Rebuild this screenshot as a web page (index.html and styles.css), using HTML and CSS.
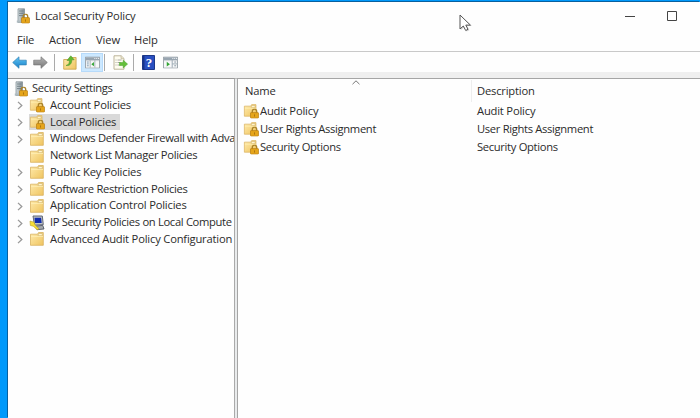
FILE: index.html
```
<!DOCTYPE html>
<html lang="en">
<head>
<meta charset="utf-8">
<title>Local Security Policy</title>
<link rel="stylesheet" href="styles.css">
</head>
<body>
<svg class="defs" aria-hidden="true">
  <defs>
    <linearGradient id="gold" x2="1" y2="1"><stop stop-color="#ffebad"/><stop offset="1" stop-color="#efc45f"/></linearGradient>
    <linearGradient id="steel" x2="1"><stop stop-color="#d5dde0"/><stop offset="1" stop-color="#839097"/></linearGradient>
    <linearGradient id="blue" x2="0" y2="1"><stop stop-color="#62c7f5"/><stop offset="1" stop-color="#167dc7"/></linearGradient>
    <linearGradient id="grey" x2="0" y2="1"><stop stop-color="#b5b5b5"/><stop offset="1" stop-color="#777"/></linearGradient>
    <symbol id="lock" viewBox="0 0 8 9"><path d="M2 4V2.6a2 2 0 0 1 4 0V4" fill="none" stroke="#a98228" stroke-width="1.2"/><rect x=".4" y="3.7" width="7.2" height="5" rx=".6" fill="#e5a51b" stroke="#b57a10" stroke-width=".6"/><path d="M4 5.3v2" stroke="#a8700f" stroke-width=".8"/></symbol>
    <symbol id="folder" viewBox="0 0 16 16"><path d="M1.5 3.2h7l1-1.7h4.8v12.8H1.5z" fill="url(#gold)" stroke="#d9b260" stroke-width=".8"/><path d="M9.5 2.5h3.8v2.2H9z" fill="#fff4cf" stroke="#cfb067" stroke-width=".6"/><path d="M2 5.5h12" stroke="#fff0b8" stroke-width=".7"/></symbol>
    <symbol id="lockfolder" viewBox="0 0 16 16"><use href="#folder" width="14.5" height="15"/><use href="#lock" x="7" y="5.5" width="9" height="10"/></symbol>
    <symbol id="server" viewBox="0 0 14 16"><path d="M2 .8h6.5v13.7H2z" fill="url(#steel)" stroke="#7c898f" stroke-width=".7"/><path d="M3 3h4.5M3 5.3h4.5M3 7.6h4.5" stroke="#65737a" stroke-width=".8"/><path d="M.8 12.5h6.5v2.2H.8z" fill="#aebbc0"/><use href="#lock" x="5" y="5.5" width="9" height="10"/></symbol>
    <symbol id="ipsec" viewBox="0 0 16 16"><path d="M4 1h9.3l1 8.6-8.8.6z" fill="#c0c4c8" stroke="#555b68" stroke-width=".9"/><path d="M5.5 2.7h6.6l.6 5.4H6z" fill="#102cad"/><path d="M6 11.2l7.8-.8 1.2 3.6-7 .7z" fill="#a5aaae" stroke="#434958" stroke-width=".8"/><path d="M1 6l4 1.2 1 2.5 4 4.2-1.8.8-3.9-3.5-2.9-.7z" fill="#f6de36" stroke="#b69c24" stroke-width=".6"/></symbol>
    <symbol id="chevron" viewBox="0 0 6 9"><path d="M1 .9l3.8 3.6L1 8.1" fill="none" stroke="#999" stroke-width="1.3"/></symbol>
    <symbol id="arrow" viewBox="0 0 15 13"><path d="M.7 6.5L7 .8v3.4h7.3v4.7H7v3.4z"/></symbol>
    <symbol id="console" viewBox="0 0 16 13"><path d="M.5.5h15v12H.5z" fill="#f7f8f9" stroke="#98a1a8"/><path d="M1 1h14v2.8H1z" fill="#98a5b0"/><path d="M10 2.2h1M12 2.2h1M14 2.2h1" stroke="#fff"/><path d="M1 4.5h14" stroke="#c7cdd2"/></symbol>
  </defs>
</svg>
<div class="window">
  <header class="titlebar">
    <svg class="app-icon"><use href="#server"/></svg>
    <span class="title">Local Security Policy</span>
    <svg class="minimize" viewBox="0 0 10 10"><path d="M0 5.5h10" stroke="#444"/></svg>
    <svg class="maximize" viewBox="0 0 10 10"><path d="M.5.5h9v9h-9z" fill="none" stroke="#444"/></svg>
  </header>
  <nav class="menu"><span class="m-file">File</span><span class="m-action">Action</span><span class="m-view">View</span><span class="m-help">Help</span></nav>
  <div class="toolbar">
    <svg class="nav-arrow back"><use href="#arrow"/></svg>
    <svg class="nav-arrow forward" viewBox="0 0 15 13"><use href="#arrow" width="15" height="13" transform="translate(15 0) scale(-1 1)"/></svg>
    <i class="sep sep-first"></i>
    <svg class="up" viewBox="0 0 14 15"><path d="M.7 4.5h5l1.2-2h6.2v11.7H.7z" fill="url(#gold)" stroke="#c9a148" stroke-width=".8"/><path d="M3 10.5c2.7-.7 3.5-2.5 3.4-5H4L7.8.8l3.4 4H8.8c0 4-2 6.2-5.8 5.7z" fill="#62b92f" stroke="#43912a" stroke-width=".5"/></svg>
    <span class="tool-active"><svg class="console" viewBox="0 0 16 13"><use href="#console" width="16" height="13"/><path d="M5.5 4v8M10.5 4v8" stroke="#a6afb7"/><path d="M2 6h2M2 8h2M2 10h2" stroke="#7b98af"/><path d="M9.5 6v4.6L6.7 8.3z" fill="#35a536"/></svg></span>
    <i class="sep"></i>
    <svg class="export" viewBox="0 0 15 15"><path d="M1 .8h7.2L11 3.5v10.7H1z" fill="#fffdf0" stroke="#b5ad91" stroke-width=".9"/><path d="M8 .8v3h3" fill="#e8e2c8" stroke="#b5ad91" stroke-width=".6"/><path d="M2.5 5h1M4.5 5h4M2.5 7.5h1M4.5 7.5h3M2.5 10h1M4.5 10h3" stroke="#929292" stroke-width=".8"/><path d="M6.5 7.5h3.7V5.2l4.4 3.9-4.4 3.8v-2.4H6.5z" fill="#65bf3a" stroke="#48a52d" stroke-width=".5"/></svg>
    <i class="sep"></i>
    <svg class="help" viewBox="0 0 13 15"><path d="M.5.5h12v14H.5z" fill="#294fc0" stroke="#1c3788"/><path d="M1 1h1.5v13H1z" fill="#173487"/><text x="7" y="12" class="question" text-anchor="middle">?</text></svg>
    <svg class="console" viewBox="0 0 16 13"><use href="#console" width="16" height="13"/><path d="M9.8 4v8M10 8h5" stroke="#98a5b0"/><path d="M4 5.8v5L7.4 8.3z" fill="#35a536"/><path d="M12 6h2M12 10h2" stroke="#8292a0"/></svg>
  </div>
  <div class="gap"></div>
  <main class="panes">
    <section class="tree">
      <div class="row root"><svg class="root-icon"><use href="#server"/></svg><span class="label tight">Security Settings</span></div>
      <div class="row"><svg class="chev"><use href="#chevron"/></svg><svg class="icon"><use href="#lockfolder"/></svg><span class="label">Account Policies</span></div>
      <div class="row selected"><svg class="chev"><use href="#chevron"/></svg><svg class="icon"><use href="#lockfolder"/></svg><span class="label">Local Policies</span></div>
      <div class="row"><svg class="chev"><use href="#chevron"/></svg><svg class="icon"><use href="#folder"/></svg><span class="label tight">Windows Defender Firewall with Adva</span></div>
      <div class="row"><i class="chev"></i><svg class="icon"><use href="#folder"/></svg><span class="label tight">Network List Manager Policies</span></div>
      <div class="row"><svg class="chev"><use href="#chevron"/></svg><svg class="icon"><use href="#folder"/></svg><span class="label">Public Key Policies</span></div>
      <div class="row"><svg class="chev"><use href="#chevron"/></svg><svg class="icon"><use href="#folder"/></svg><span class="label tight">Software Restriction Policies</span></div>
      <div class="row"><svg class="chev"><use href="#chevron"/></svg><svg class="icon"><use href="#folder"/></svg><span class="label">Application Control Policies</span></div>
      <div class="row"><svg class="chev"><use href="#chevron"/></svg><svg class="icon"><use href="#ipsec"/></svg><span class="label tight">IP Security Policies on Local Compute</span></div>
      <div class="row"><svg class="chev"><use href="#chevron"/></svg><svg class="icon"><use href="#folder"/></svg><span class="label">Advanced Audit Policy Configuration</span></div>
    </section>
    <div class="splitter"></div>
    <section class="list">
      <div class="list-head"><span class="name">Name</span><span class="desc">Description</span><svg class="sort" viewBox="0 0 8 5"><path d="M.5 4.2L4 .8l3.5 3.4" fill="none" stroke="#777"/></svg></div>
      <div class="item"><svg class="icon"><use href="#lockfolder"/></svg><span class="item-name">Audit Policy</span><span>Audit Policy</span></div>
      <div class="item tight"><svg class="icon"><use href="#lockfolder"/></svg><span class="item-name">User Rights Assignment</span><span>User Rights Assignment</span></div>
      <div class="item tight"><svg class="icon"><use href="#lockfolder"/></svg><span class="item-name">Security Options</span><span>Security Options</span></div>
    </section>
  </main>
</div>
<svg class="pointer" viewBox="0 0 14 19"><path d="M2 2v14l3.3-3 2.4 4.6 2.7-1.3-2.3-4.3H13z" fill="#bbb" opacity=".6"/><path d="M1 1v14l3.3-3 2.4 4.5L9 15.3l-2.2-4.2h4.6z" fill="#fff" stroke="#555"/></svg>
</body>
</html>
```

FILE: styles.css
```
* { box-sizing: border-box; }
body { margin: 0; width: 700px; height: 418px; overflow: hidden; padding: 2px 0 0 8px; background: #0099fb; color: #2b2b2b; font: 11.2px/16px "Open Sans", "Noto Sans", sans-serif; letter-spacing: -.19px; }
svg { display: block; flex: none; }
.defs { position: absolute; width: 0; height: 0; }
.window { height: 416px; display: flex; flex-direction: column; background: #fefefe; box-shadow: -1px -1px 0 #08609f; }
.titlebar { height: 28px; flex: none; display: flex; align-items: center; padding-left: 8px; }
.app-icon { width: 14px; height: 16px; margin-right: 5px; }
.title { flex: 1; }
.minimize, .maximize { width: 10px; height: 10px; }
.minimize { margin-right: 32px; }
.maximize { margin-right: 23px; }
.menu { height: 21px; flex: none; display: flex; align-items: center; padding: 0 0 1px 9px; letter-spacing: -.1px; }
.m-file { width: 32px; }
.m-action { width: 47px; }
.m-view { width: 38px; }
.toolbar { height: 21px; flex: none; display: flex; align-items: center; border-top: 1px solid #c9c9c9; padding: 1px 0 0 4px; }
.nav-arrow { width: 15px; height: 13px; margin-right: 6px; stroke-width: .7; }
.back { fill: url(#blue); stroke: #3382b5; }
.forward { fill: url(#grey); stroke: #777; }
.sep { width: 1px; height: 17px; background: #aaa; }
.sep-first { margin-right: 8px; }
.up { width: 14px; height: 15px; margin-right: 4px; }
.tool-active { width: 22px; height: 19px; display: grid; place-items: center; background: #cce8ff; border: 1px solid #b6dafa; margin-right: 1px; }
.console { width: 15px; height: 13px; }
.export { width: 15px; height: 15px; margin: 0 5px 0 8px; }
.help { width: 13px; height: 15px; margin: 0 8px; }
.question { fill: #fff; font: bold 13px "Liberation Serif", serif; }
.gap { height: 6px; flex: none; background: #efefef; }
.panes { flex: 1; min-height: 0; display: grid; grid-template-columns: 227px 2px 1fr; }
.tree { border-top: 1px solid #999; border-right: 1px solid #aaa; overflow: hidden; padding-top: 1.2px; }
.row { height: 16.75px; display: flex; align-items: center; padding-left: 8px; white-space: nowrap; }
.root { padding-left: 6px; }
.root-icon { width: 14px; height: 16px; margin-right: 4px; }
.chev { width: 6px; height: 9px; flex: none; margin: 1px 6px 0 1px; }
.icon { width: 16px; height: 16px; }
.row .icon { margin-right: 1px; }
.row .label { padding: 0 4px; line-height: 16.75px; }
.row .tight, .tight { letter-spacing: -.32px; }
.root .label { padding-left: 0; }
.selected .icon, .selected .label { background: #d9d9d9; }
.selected .icon { margin-right: 0; }
.selected .label { padding-left: 5px; }
.splitter { background: #e9ebec; border-top: 1px solid #bbb; }
.list { border-top: 1px solid #a5a5a5; border-left: 1px solid #a5a5a5; }
.list-head { position: relative; height: 23.6px; display: flex; align-items: center; padding-left: 7px; }
.name { width: 226px; }
.desc { height: 22px; line-height: 22px; border-left: 1px solid #eee; padding-left: 5px; }
.sort { position: absolute; left: 114px; top: 1px; width: 8px; height: 5px; }
.item { height: 17.7px; line-height: 14px; display: flex; align-items: center; padding-left: 5px; white-space: nowrap; }
.item-name { width: 218px; padding-left: 1px; }
.pointer { position: absolute; left: 459px; top: 14px; width: 14px; height: 19px; }
```
